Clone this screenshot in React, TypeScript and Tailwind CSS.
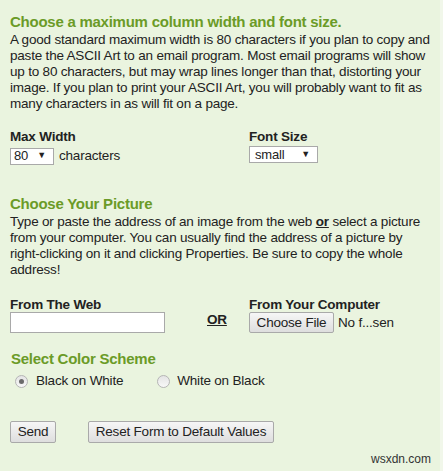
import React from "react";

const Radio = ({ checked }: { checked?: boolean }) => (
  <span className="inline-flex h-[13px] w-[13px] items-center justify-center rounded-full border border-[#b5b5b5] bg-gradient-to-b from-[#e4e4e4] to-[#f8f8f8]">
    {checked && <span className="h-[5px] w-[5px] rounded-full bg-[#6a6a6a]" />}
  </span>
);

const Btn = ({ children, className = "" }: { children: React.ReactNode; className?: string }) => (
  <span
    className={`inline-flex items-center justify-center rounded-[2px] border border-[#a9a9a9] bg-gradient-to-b from-[#f6f6f6] to-[#dedede] text-[13.5px] tracking-[-0.2px] text-[#222] ${className}`}
  >
    {children}
  </span>
);

export default function App() {
  return (
    <div
      className="flex h-[471px] w-[443px] bg-[#eaf4df] text-[#222]"
      style={{ fontFamily: '"Liberation Sans", Arial, sans-serif' }}
    >
      <div className="relative w-[440px] pl-[10px] pt-[13px] text-[13.5px] tracking-[-0.2px]">
        <h2 className="text-[15px] font-bold leading-[18px] tracking-[-0.25px] text-[#6b9b27]">
          Choose a maximum column width and font size.
        </h2>
        <p className="mt-[1px] w-[423px] leading-[16px]">
          A good standard maximum width is 80 characters if you plan to copy and paste the ASCII Art to an email
          program. Most email programs will show up to 80 characters, but may wrap lines longer than that, distorting
          your image. If you plan to print your ASCII Art, you will probably want to fit as many characters in as will
          fit on a page.
        </p>

        <div className="mt-[17px] grid grid-cols-[239px_1fr]">
          <div>
            <div className="font-bold leading-[16px]">Max Width</div>
            <div className="mt-[1px] flex items-center gap-[5px]">
              <span className="flex h-[17px] w-[44px] items-center justify-between border border-[#a9a9a9] bg-white pl-[3px] pr-[7px] text-[13px]">
                <span>80</span>
                <span className="text-[9px]">▼</span>
              </span>
              <span>characters</span>
            </div>
          </div>
          <div>
            <div className="font-bold leading-[16px]">Font Size</div>
            <div className="mt-[1px] flex items-center">
              <span className="flex h-[17px] w-[69px] items-center justify-between border border-[#a9a9a9] bg-white pl-[5px] pr-[7px] text-[13px]">
                <span>small</span>
                <span className="text-[9px]">▼</span>
              </span>
            </div>
          </div>
        </div>

        <h2 className="mt-[29px] text-[15px] font-bold leading-[18px] tracking-[-0.25px] text-[#6b9b27]">
          Choose Your Picture
        </h2>
        <p className="mt-[1px] w-[423px] leading-[16px]">
          Type or paste the address of an image from the web <b className="underline">or</b> select a picture from
          your computer. You can usually find the address of a picture by right-clicking on it and clicking
          Properties. Be sure to copy the whole address!
        </p>

        <div className="mt-[19px] grid grid-cols-[197px_42px_1fr]">
          <div>
            <div className="font-bold leading-[16px]">From The Web</div>
            <div className="mt-[-1px] h-[21px] w-[155px] border border-[#a9a9a9] bg-white" />
          </div>
          <div className="flex items-end pb-[5px]">
            <b className="leading-[16px] underline">OR</b>
          </div>
          <div>
            <div className="font-bold leading-[16px]">From Your Computer</div>
            <div className="mt-[-1px] flex items-center gap-[4px]">
              <Btn className="h-[21px] w-[85px]">Choose File</Btn>
              <span>No f...sen</span>
            </div>
          </div>
        </div>

        <h2 className="ml-[1px] mt-[17px] text-[15px] font-bold leading-[18px] tracking-[-0.25px] text-[#6b9b27]">
          Select Color Scheme
        </h2>
        <div className="mt-[5px] flex items-center leading-[16px]">
          <span className="ml-[5px] flex">
            <Radio checked />
          </span>
          <span className="ml-[8px]">Black on White</span>
          <span className="ml-[34px] flex">
            <Radio />
          </span>
          <span className="ml-[7px]">White on Black</span>
        </div>

        <div className="mt-[32px] flex items-center">
          <Btn className="h-[22px] w-[46px]">Send</Btn>
          <Btn className="ml-[32px] h-[22px] w-[186px]">Reset Form to Default Values</Btn>
        </div>

        <div className="absolute bottom-[3px] right-[9px] text-[12px] tracking-normal text-[#333]">wsxdn.com</div>
      </div>
      <div className="w-[3px] bg-[#f1f7ea]" />
    </div>
  );
}
